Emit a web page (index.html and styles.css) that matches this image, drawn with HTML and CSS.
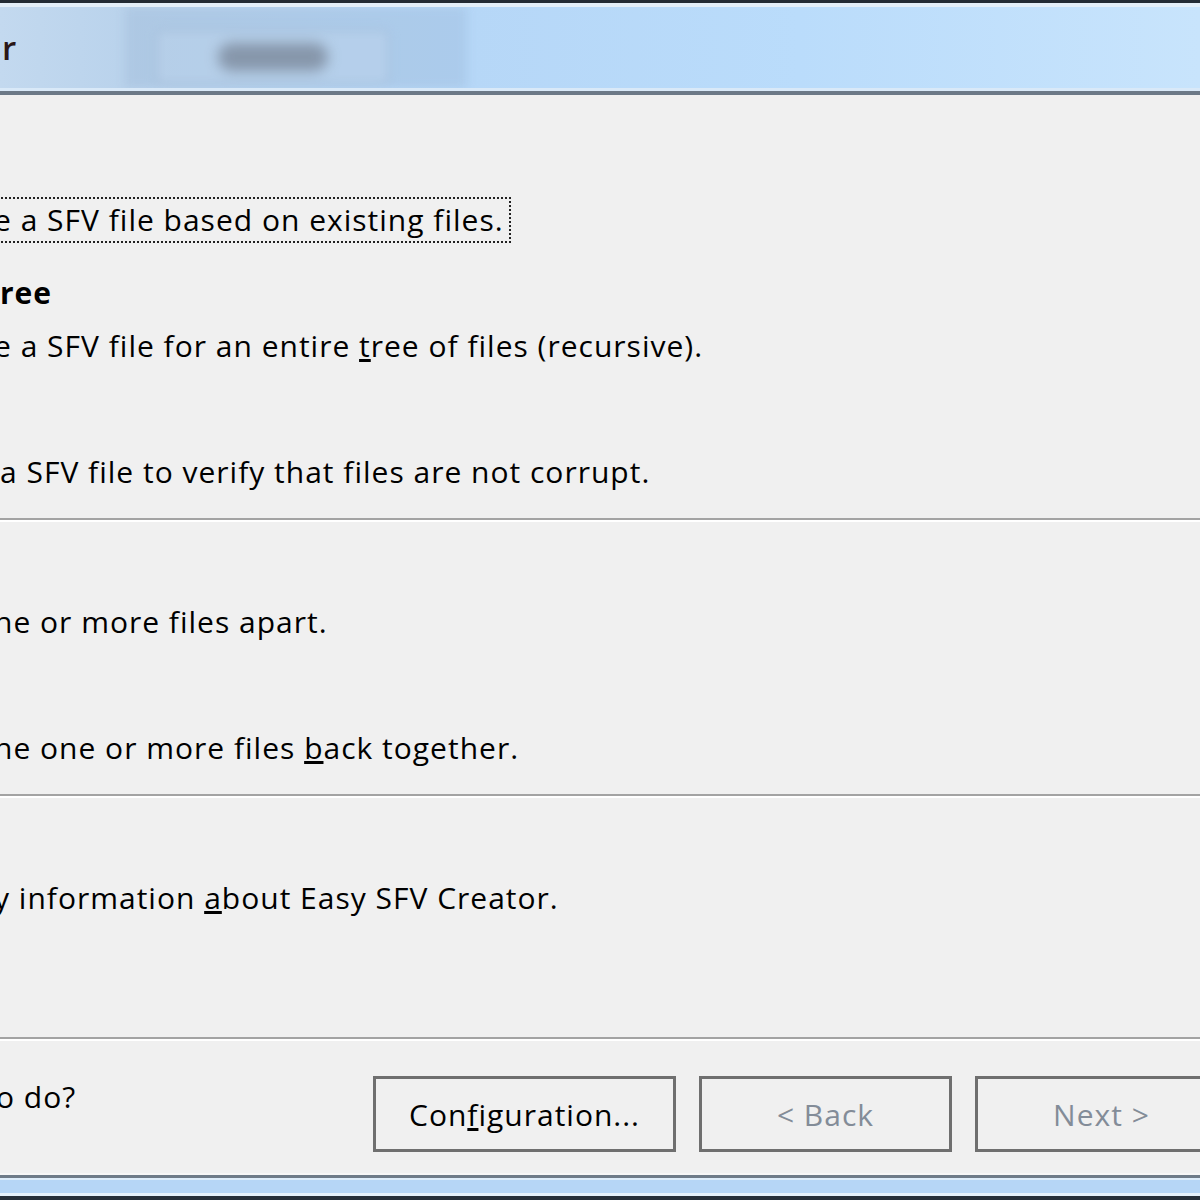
FILE: index.html
```html
<!DOCTYPE html>
<html lang="en">
<head>
    <meta charset="UTF-8">
    <title>Easy SFV Creator</title>
    <link rel="stylesheet" href="styles.css">
</head>
<body>
    <div class="window">
        <div class="frame-top"></div>
        <div class="titlebar">
            <span class="title">r</span>
            <div class="ghost">
                <div class="ghost-btn"><div class="ghost-label"></div></div>
            </div>
        </div>
        <div class="title-edge"></div>

        <div class="content">
            <div class="group">
                <div class="option">
                    <div class="option-title"></div>
                    <div class="desc cut"><span class="focus">e a SFV file based on existing files.</span></div>
                </div>
                <div class="option">
                    <div class="option-title">ree</div>
                    <div class="desc cut">e a SFV file for an entire <u>t</u>ree of files (recursive).</div>
                </div>
                <div class="option">
                    <div class="option-title"></div>
                    <div class="desc">a SFV file to verify that files are not corrupt.</div>
                </div>
            </div>
            <div class="separator"></div>
            <div class="group">
                <div class="option">
                    <div class="option-title"></div>
                    <div class="desc cut">ne or more files apart.</div>
                </div>
                <div class="option">
                    <div class="option-title"></div>
                    <div class="desc cut">ne one or more files <u>b</u>ack together.</div>
                </div>
            </div>
            <div class="separator"></div>
            <div class="group">
                <div class="option">
                    <div class="option-title"></div>
                    <div class="desc cut">y information <u>a</u>bout Easy SFV Creator.</div>
                </div>
            </div>
        </div>

        <div class="separator footer-sep"></div>
        <div class="footer">
            <span class="prompt">o do?</span>
            <div class="buttons">
                <button class="btn btn-config" type="button">Con<u>f</u>iguration...</button>
                <button class="btn btn-back" type="button" disabled>&lt; Back</button>
                <button class="btn btn-next" type="button" disabled>Next &gt;</button>
            </div>
        </div>
        <div class="frame-bottom"></div>
    </div>
</body>
</html>
```

FILE: styles.css
```css
* {
    margin: 0;
    padding: 0;
    box-sizing: border-box;
}

body {
    font-family: 'Open Sans', 'Noto Sans', sans-serif;
    font-size: 30px;
    letter-spacing: 1px;
    color: #000;
    background: #f0f0f0;
    width: 1200px;
    height: 1200px;
    overflow: hidden;
}

.window {
    display: flex;
    flex-direction: column;
    height: 1200px;
}

.frame-top {
    flex: none;
    height: 3px;
    background: #232b34;
}

.titlebar {
    flex: none;
    height: 88px;
    border-top: 4px solid #e3eef8;
    border-bottom: 3px solid #d9e9f8;
    background: linear-gradient(90deg, #c3d9ef 0, #bad3ec 120px, #b6d7f7 470px, #badcfb 800px, #c8e4fc 1200px);
    display: flex;
    align-items: center;
    overflow: hidden;
}

.title {
    padding-left: 2px;
    font-size: 33px;
    font-weight: 600;
    color: #2a1616;
    line-height: 1;
}

.ghost {
    align-self: stretch;
    margin-left: 108px;
    width: 342px;
    background: rgba(140, 168, 200, 0.24);
    filter: blur(5px);
    display: flex;
    align-items: flex-start;
    padding: 22px 0 0 30px;
}

.ghost-btn {
    width: 235px;
    height: 56px;
    border-radius: 8px;
    background: rgba(190, 212, 236, 0.5);
    border: 2px solid rgba(130, 158, 190, 0.4);
    display: flex;
    align-items: center;
    justify-content: center;
}

.ghost-label {
    width: 110px;
    height: 28px;
    border-radius: 14px;
    background: #8696aa;
    filter: blur(5px);
}

.title-edge {
    flex: none;
    height: 4px;
    background: #6c7987;
}

.content {
    flex: 1;
    padding-top: 45px;
    display: flex;
    flex-direction: column;
    overflow: hidden;
}

.group {
    display: flex;
    flex-direction: column;
    gap: 20px;
    padding-bottom: 20px;
}

.option-title {
    height: 53px;
    line-height: 53px;
    font-weight: 700;
    white-space: nowrap;
}

.desc {
    height: 53px;
    line-height: 53px;
    white-space: nowrap;
}

.cut {
    margin-left: -6px;
}

.focus {
    display: inline-block;
    vertical-align: middle;
    line-height: 42px;
    border: 2px dotted #222;
    border-left: none;
    padding-right: 5px;
    margin-top: -6px;
}

.separator {
    flex: none;
    height: 4px;
    border-top: 2px solid #a3a3a3;
    border-bottom: 2px solid #fff;
    margin-bottom: 20px;
}

.footer-sep {
    margin-bottom: 0;
}

.footer {
    flex: none;
    height: 132px;
    display: flex;
    align-items: flex-start;
    padding-top: 29px;
}

.prompt {
    line-height: 53px;
    margin-left: -4px;
    white-space: nowrap;
}

.buttons {
    display: flex;
    gap: 23px;
    margin-left: auto;
    margin-right: -28px;
    margin-top: 6px;
}

.btn {
    height: 76px;
    border: 3px solid #6f6f6f;
    background: #f0f0f0;
    font: inherit;
    letter-spacing: inherit;
    color: #000;
    display: flex;
    align-items: center;
    justify-content: center;
}

.btn-config {
    width: 303px;
}

.btn-back,
.btn-next {
    width: 253px;
}

.btn:disabled {
    color: #838c98;
}

.frame-bottom {
    flex: none;
    height: 27px;
    background: linear-gradient(to bottom, #f6f6f6 0 2px, #6e7b88 2px 5px, #dcecfa 5px 7px, #b6d6f6 7px 20px, #e6f2fc 20px 23px, #27303a 23px 27px);
}
```
